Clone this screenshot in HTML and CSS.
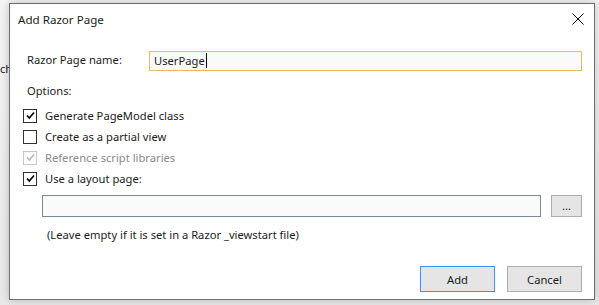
FILE: index.html
```html
<!doctype html>
<html lang="en-US">
    <head>
        <meta charset="utf-8">
        <title>Add Razor Page</title>
        <link rel="stylesheet" href="styles.css">
    </head>
    <body>
        <div class="backdrop"><span>ch</span></div>
        <div class="dialog">
            <div class="titlebar">
                <span class="title">Add Razor Page</span>
                <svg class="close" width="12" height="12" viewBox="0 0 12 12"><path d="M0.5 0.5L11.5 11.5M11.5 0.5L0.5 11.5" stroke="#000" stroke-width="1" fill="none"/></svg>
            </div>
            <form class="content">
                <div class="name-row">
                    <label for="name">Razor Page name:</label>
                    <div class="field focused"><span class="caret">UserPage</span></div>
                </div>
                <p class="options">Options:</p>
                <div class="checks">
                    <label class="check"><span class="box"><svg width="11" height="11" viewBox="0 0 11 11"><path d="M2 5.5L4.3 8L9 2.5" stroke="#000" stroke-width="1.6" fill="none"/></svg></span>Generate PageModel class</label>
                    <label class="check"><span class="box"></span>Create as a partial view</label>
                    <label class="check disabled"><span class="box"><svg width="11" height="11" viewBox="0 0 11 11"><path d="M2 5.5L4.3 8L9 2.5" stroke="#b5b5b5" stroke-width="1.6" fill="none"/></svg></span>Reference script libraries</label>
                    <label class="check"><span class="box"><svg width="11" height="11" viewBox="0 0 11 11"><path d="M2 5.5L4.3 8L9 2.5" stroke="#000" stroke-width="1.6" fill="none"/></svg></span>Use a layout page:</label>
                </div>
                <div class="layout-row">
                    <div class="field"></div>
                    <button type="button" class="browse">...</button>
                </div>
                <p class="hint">(Leave empty if it is set in a Razor _viewstart file)</p>
                <div class="actions">
                    <button type="submit" class="primary">Add</button>
                    <button type="button">Cancel</button>
                </div>
            </form>
        </div>
    </body>
</html>
```

FILE: styles.css
```css
* {
    padding: 0;
    margin: 0;
    box-sizing: border-box;
    font-family: "Noto Sans", "Open Sans", sans-serif;
    font-size: 11.2px;
    color: #1b1b1b;
}

body {
    width: 599px;
    height: 305px;
    overflow: hidden;
    background: linear-gradient(to bottom, #f4f4f4, #e9e9e9);
}

.backdrop {
    padding-top: 61px;
    line-height: 16px;
    font-size: 12px;
}

.dialog {
    position: absolute;
    left: 9px;
    top: 3px;
    width: 586px;
    height: 297px;
    background: #fff;
    border: 1px solid #6e6e6e;
    box-shadow: 0 0 9px rgba(0, 0, 0, 0.22);
}

.titlebar {
    display: flex;
    justify-content: space-between;
    align-items: center;
    height: 28px;
    padding: 2px 10px 0 8px;
}

.title {
    font-size: 11.6px;
}

.close {
    display: block;
}

.content {
    padding: 19px 12px 0 17px;
}

.name-row {
    display: flex;
    align-items: center;
}

.name-row label {
    width: 122px;
    padding-bottom: 3px;
}

.field {
    flex: 1;
    height: 20px;
    background: #fafafa;
    border: 1px solid #7a8999;
    padding: 0 4px;
    line-height: 18px;
}

.field.focused {
    border-color: #e3bd63;
}

.caret {
    border-right: 1px solid #000;
    padding-right: 1px;
}

.options {
    margin-top: 12px;
    line-height: 16px;
}

.checks {
    display: grid;
    grid-auto-rows: 21px;
    margin-top: 6px;
    margin-left: -4px;
}

.check {
    display: flex;
    align-items: center;
    gap: 8px;
}

.box {
    width: 14px;
    height: 14px;
    border: 1px solid #333;
    background: #fff;
    display: flex;
    align-items: center;
    justify-content: center;
}

.disabled {
    color: #8a8a8a;
}

.disabled .box {
    border-color: #c8c8c8;
}

.layout-row {
    display: flex;
    gap: 10px;
    margin: 6px 0 0 15px;
}

.layout-row .field {
    height: 22px;
}

button {
    background: #e5e5e5;
    border: 1px solid #adadad;
    cursor: pointer;
}

.browse {
    width: 31px;
    height: 22px;
    line-height: 14px;
}

.hint {
    margin: 10px 0 0 20px;
    line-height: 16px;
}

.actions {
    display: flex;
    justify-content: flex-end;
    gap: 12px;
    margin-top: 23px;
}

.actions button {
    width: 75px;
    height: 26px;
}

.actions .primary {
    border-color: #3399ff;
}
```
